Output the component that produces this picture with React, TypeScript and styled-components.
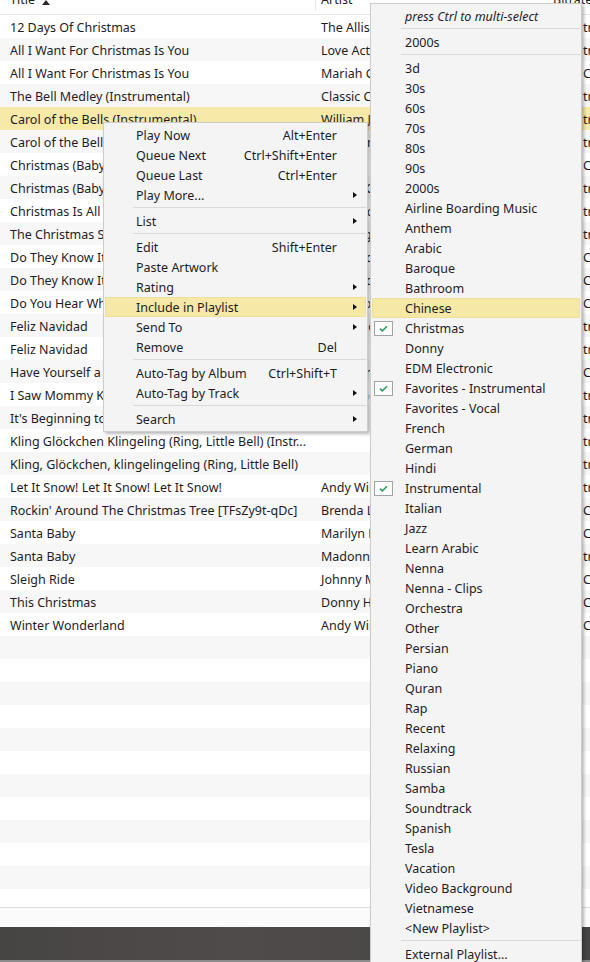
import React from "react";
import styled, { createGlobalStyle } from "styled-components";

const GlobalStyle = createGlobalStyle`
  html, body { margin: 0; padding: 0; background: #ffffff; }
  body {
    font-family: "Noto Sans", "Open Sans", sans-serif;
    font-size: 12.5px;
    color: #1e1c28;
    overflow: hidden;
  }
  * { box-sizing: border-box; }
`;

const COLS = "315px 238px 26px 1fr";

const Window = styled.div`
  position: relative;
  width: 590px;
  height: 962px;
  overflow: hidden;
  display: flex;
  flex-direction: column;
  background: #ffffff;
`;

const ListPane = styled.div`
  flex: 1;
  min-height: 0;
  display: flex;
  flex-direction: column;
  overflow: hidden;
`;

const HeaderRow = styled.div`
  flex-shrink: 0;
  height: 15px;
  display: grid;
  grid-template-columns: ${COLS};
  grid-template-rows: 14px;
  align-items: end;
  border-bottom: 1px solid #e5e5e5;
  overflow: hidden;
`;

const HeaderCell = styled.div<{ $pad: number; $divider?: boolean; $spill?: boolean }>`
  height: 20px;
  line-height: 20px;
  margin-bottom: 4px;
  padding-left: ${(p) => p.$pad}px;
  white-space: nowrap;
  overflow: ${(p) => (p.$spill ? "visible" : "hidden")};
  display: flex;
  align-items: center;
  border-left: ${(p) => (p.$divider ? "1px solid #e5e5e5" : "none")};
`;

const SortArrow = styled.span`
  display: inline-block;
  width: 0;
  height: 0;
  margin-left: 7px;
  margin-top: 4px;
  border-left: 4.5px solid transparent;
  border-right: 4.5px solid transparent;
  border-bottom: 5px solid #2a2a2a;
`;

const Row = styled.div<{ $alt?: boolean; $selected?: boolean }>`
  flex-shrink: 0;
  height: 23px;
  display: grid;
  grid-template-columns: ${COLS};
  align-items: center;
  background: ${(p) => (p.$selected ? "#f7e9a8" : p.$alt ? "#f7f7f7" : "#ffffff")};
`;

const Cell = styled.div<{ $pad: number }>`
  padding-left: ${(p) => p.$pad}px;
  padding-top: 2px;
  white-space: nowrap;
  overflow: hidden;
  text-overflow: clip;
`;

const ScrollStrip = styled.div`
  flex-shrink: 0;
  height: 20px;
  border-top: 1px solid #dedede;
  background: #fbfbfb;
`;

const StatusBar = styled.div`
  flex-shrink: 0;
  height: 33px;
  background: linear-gradient(90deg, #474544 0%, #4f4b4a 40%, #4a4847 70%, #474646 100%);
`;

const BottomEdge = styled.div`
  flex-shrink: 0;
  height: 2px;
  background: #8c8c8c;
`;

const Menu = styled.div<{ $left: number; $top: number; $width: number }>`
  position: absolute;
  left: ${(p) => p.$left}px;
  top: ${(p) => p.$top}px;
  width: ${(p) => p.$width}px;
  background: #f4f4f4;
  border: 1px solid #cccccc;
  box-shadow: 2px 2px 3px rgba(0, 0, 0, 0.28);
  padding: 2px 0;
`;

const MenuItem = styled.div<{ $hot?: boolean }>`
  height: 20px;
  margin: 0 1px;
  display: flex;
  align-items: center;
  white-space: nowrap;
  background: ${(p) => (p.$hot ? "#f6e8a6" : "transparent")};
  box-shadow: ${(p) => (p.$hot ? "inset 0 0 0 1px #ede09a" : "none")};
`;

const Gutter = styled.div<{ $width: number }>`
  width: ${(p) => p.$width}px;
  flex-shrink: 0;
  height: 100%;
  display: flex;
  align-items: center;
  padding-left: 2px;
`;

const Label = styled.span<{ $italic?: boolean }>`
  flex: 1;
  font-style: ${(p) => (p.$italic ? "italic" : "normal")};
`;

const Shortcut = styled.span`
  text-align: right;
  padding-left: 16px;
`;

const ArrowCell = styled.div`
  width: 29px;
  flex-shrink: 0;
  display: flex;
  align-items: center;
  padding-left: 16px;
`;

const SubArrow = styled.span`
  width: 0;
  height: 0;
  border-left: 4px solid #111111;
  border-top: 3.5px solid transparent;
  border-bottom: 3.5px solid transparent;
`;

const MenuSep = styled.div<{ $indent: number }>`
  height: 1px;
  background: #d9d9d9;
  margin: 2px 1px 3px ${(p) => p.$indent}px;
`;

const CheckBox = styled.span`
  width: 19px;
  height: 15px;
  border: 1px solid #a3a3a3;
  background: #fcfcfc;
  display: flex;
  align-items: center;
  justify-content: center;
`;

const CheckMark = () => (
  <svg width="9" height="7" viewBox="0 0 9 7">
    <path d="M1 3.6 L3.4 5.8 L8 1.2" fill="none" stroke="#2f9e64" strokeWidth="1.6" />
  </svg>
);

type Track = { title: string; artist: string; extra: string };

const tracks: Track[] = [
  { title: "12 Days Of Christmas", artist: "The Allisons", extra: "track" },
  { title: "All I Want For Christmas Is You", artist: "Love Actually", extra: "track" },
  { title: "All I Want For Christmas Is You", artist: "Mariah Carey", extra: "CD" },
  { title: "The Bell Medley (Instrumental)", artist: "Classic Christmas", extra: "track" },
  { title: "Carol of the Bells (Instrumental)", artist: "William Joseph", extra: "track" },
  { title: "Carol of the Bells", artist: "Pentatonix", extra: "track" },
  { title: "Christmas (Baby Please Come Home)", artist: "Darlene Love", extra: "CD" },
  { title: "Christmas (Baby Please Come Home)", artist: "Mariah Carey", extra: "track" },
  { title: "Christmas Is All Around", artist: "Billy Mack", extra: "track" },
  { title: "The Christmas Song", artist: "Nat King Cole", extra: "track" },
  { title: "Do They Know It's Christmas?", artist: "Band Aid", extra: "CD" },
  { title: "Do They Know It's Christmas?", artist: "Band Aid 30", extra: "CD" },
  { title: "Do You Hear What I Hear?", artist: "Bing Crosby", extra: "CD" },
  { title: "Feliz Navidad", artist: "José Feliciano", extra: "track" },
  { title: "Feliz Navidad", artist: "Michael Bublé", extra: "track" },
  { title: "Have Yourself a Merry Little Christmas", artist: "Judy Garland", extra: "CD" },
  { title: "I Saw Mommy Kissing Santa Claus", artist: "The Ronettes", extra: "track" },
  { title: "It's Beginning to Look a Lot Like Christmas", artist: "Michael Bublé", extra: "track" },
  { title: "Kling Glöckchen Klingeling (Ring, Little Bell) (Instr...", artist: "", extra: "track" },
  { title: "Kling, Glöckchen, klingelingeling (Ring, Little Bell)", artist: "", extra: "track" },
  { title: "Let It Snow! Let It Snow! Let It Snow!", artist: "Andy Williams", extra: "track" },
  { title: "Rockin' Around The Christmas Tree [TFsZy9t-qDc]", artist: "Brenda Lee", extra: "CD" },
  { title: "Santa Baby", artist: "Marilyn Monroe", extra: "CD" },
  { title: "Santa Baby", artist: "Madonna", extra: "track" },
  { title: "Sleigh Ride", artist: "Johnny Mathis", extra: "CD" },
  { title: "This Christmas", artist: "Donny Hathaway", extra: "CD" },
  { title: "Winter Wonderland", artist: "Andy Williams", extra: "CD" },
];

const EMPTY_ROWS = 13;

type CtxEntry = { label: string; shortcut?: string; sub?: boolean; hot?: boolean } | "sep";

const contextItems: CtxEntry[] = [
  { label: "Play Now", shortcut: "Alt+Enter" },
  { label: "Queue Next", shortcut: "Ctrl+Shift+Enter" },
  { label: "Queue Last", shortcut: "Ctrl+Enter" },
  { label: "Play More...", sub: true },
  "sep",
  { label: "List", sub: true },
  "sep",
  { label: "Edit", shortcut: "Shift+Enter" },
  { label: "Paste Artwork" },
  { label: "Rating", sub: true },
  { label: "Include in Playlist", sub: true, hot: true },
  { label: "Send To", sub: true },
  { label: "Remove", shortcut: "Del" },
  "sep",
  { label: "Auto-Tag by Album", shortcut: "Ctrl+Shift+T" },
  { label: "Auto-Tag by Track", sub: true },
  "sep",
  { label: "Search", sub: true },
];

const playlists = [
  "3d", "30s", "60s", "70s", "80s", "90s", "2000s", "Airline Boarding Music", "Anthem", "Arabic",
  "Baroque", "Bathroom", "Chinese", "Christmas", "Donny", "EDM Electronic", "Favorites - Instrumental",
  "Favorites - Vocal", "French", "German", "Hindi", "Instrumental", "Italian", "Jazz", "Learn Arabic",
  "Nenna", "Nenna - Clips", "Orchestra", "Other", "Persian", "Piano", "Quran", "Rap", "Recent",
  "Relaxing", "Russian", "Samba", "Soundtrack", "Spanish", "Tesla", "Vacation", "Video Background",
  "Vietnamese", "<New Playlist>",
];

const checked = new Set(["Christmas", "Favorites - Instrumental", "Instrumental"]);
const hotPlaylist = "Chinese";

export default function App() {
  return (
    <>
      <GlobalStyle />
      <Window>
        <ListPane>
          <HeaderRow>
            <HeaderCell $pad={10}>
              Title <SortArrow />
            </HeaderCell>
            <HeaderCell $pad={5} $divider>Artist</HeaderCell>
            <HeaderCell $pad={0} $spill>Bitrate</HeaderCell>
            <HeaderCell $pad={4} />
          </HeaderRow>
          {tracks.map((t, i) => (
            <Row key={i} $alt={i % 2 === 1} $selected={i === 4}>
              <Cell $pad={10}>{t.title}</Cell>
              <Cell $pad={6}>{t.artist}</Cell>
              <Cell $pad={4}>320</Cell>
              <Cell $pad={4}>{t.extra}</Cell>
            </Row>
          ))}
          {Array.from({ length: EMPTY_ROWS }).map((_, j) => (
            <Row key={`e${j}`} $alt={(tracks.length + j) % 2 === 1} />
          ))}
        </ListPane>
        <ScrollStrip />
        <StatusBar />
        <BottomEdge />

        <Menu $left={103} $top={122} $width={265}>
          {contextItems.map((it, i) =>
            it === "sep" ? (
              <MenuSep key={i} $indent={29} />
            ) : (
              <MenuItem key={i} $hot={it.hot}>
                <Gutter $width={31} />
                <Label>{it.label}</Label>
                {it.shortcut && <Shortcut>{it.shortcut}</Shortcut>}
                <ArrowCell>{it.sub && <SubArrow />}</ArrowCell>
              </MenuItem>
            )
          )}
        </Menu>

        <Menu $left={370} $top={3} $width={212}>
          <MenuItem>
            <Gutter $width={33} />
            <Label $italic>press Ctrl to multi-select</Label>
          </MenuItem>
          <MenuSep $indent={30} />
          <MenuItem>
            <Gutter $width={33} />
            <Label>2000s</Label>
          </MenuItem>
          <MenuSep $indent={30} />
          {playlists.map((name) => (
            <MenuItem key={name} $hot={name === hotPlaylist}>
              <Gutter $width={33}>
                {checked.has(name) && (
                  <CheckBox>
                    <CheckMark />
                  </CheckBox>
                )}
              </Gutter>
              <Label>{name}</Label>
            </MenuItem>
          ))}
          <MenuSep $indent={30} />
          <MenuItem>
            <Gutter $width={33} />
            <Label>External Playlist...</Label>
          </MenuItem>
        </Menu>
      </Window>
    </>
  );
}
